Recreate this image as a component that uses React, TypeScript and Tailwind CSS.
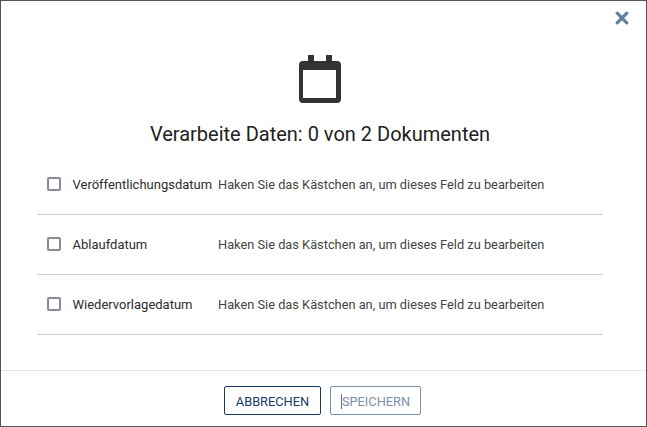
const fields = ["Veröffentlichungsdatum", "Ablaufdatum", "Wiedervorlagedatum"];

const CalendarIcon = () => (
  <svg width="44" height="48" viewBox="0 0 44 48" fill="none">
    <path
      fillRule="evenodd"
      clipRule="evenodd"
      d="M10 0h6v6h12V0h6v6h5a4 4 0 0 1 4 4v34a4 4 0 0 1-4 4H5a4 4 0 0 1-4-4V10a4 4 0 0 1 4-4h5V0zM5 15v28h33V15H5z"
      fill="#333335"
    />
  </svg>
);

const CloseIcon = () => (
  <svg width="14" height="14" viewBox="0 0 14 14">
    <path d="M2.2 2.2l9.6 9.6M11.8 2.2l-9.6 9.6" stroke="#64809f" strokeWidth="3.2" strokeLinecap="round" />
  </svg>
);

export default function App() {
  return (
    <div className="w-[647px] h-[427px] bg-white border border-[#555] flex flex-col font-['Roboto',sans-serif] overflow-hidden">
      <div className="flex justify-end pt-[10px] pr-[17px]">
        <CloseIcon />
      </div>
      <div className="flex justify-center mt-[30px] pr-[7px]">
        <CalendarIcon />
      </div>
      <h1 className="text-center text-[20px] leading-[24px] text-[#222] mt-[19px] pr-[7px]">
        Verarbeite Daten: 0 von 2 Dokumenten
      </h1>
      <div className="ml-[36px] mr-[43px] mt-[9px]">
        {fields.map((f) => (
          <div key={f} className="h-[60px] flex items-center border-b border-[#d0d0d0]">
            <span className="w-[14px] h-[14px] ml-[10px] -mt-[2px] rounded-[2px] border-2 border-[#8a8a96] bg-white" />
            <span className="w-[145.5px] ml-[11.5px] text-[13px] text-[#2c2c2c] whitespace-nowrap">{f}</span>
            <span className="text-[12.8px] text-[#444] whitespace-nowrap">
              Haken Sie das Kästchen an, um dieses Feld zu bearbeiten
            </span>
          </div>
        ))}
      </div>
      <div className="mt-[35px] border-t border-[#e4e4e4] flex-1 flex justify-center gap-[9px] pt-[15px] pr-[2px]">
        <button className="w-[97px] h-[29px] pt-[2px] rounded-[2px] border border-[#173a66] bg-white text-[12.8px] text-[#173a66]">
          ABBRECHEN
        </button>
        <button className="w-[91px] h-[29px] pt-[2px] rounded-[2px] border border-[#7c90aa] bg-white text-[12.8px] text-[#7c90aa]">
          <span className="border-l border-[#5a7090]">SPEICHERN</span>
        </button>
      </div>
    </div>
  );
}
